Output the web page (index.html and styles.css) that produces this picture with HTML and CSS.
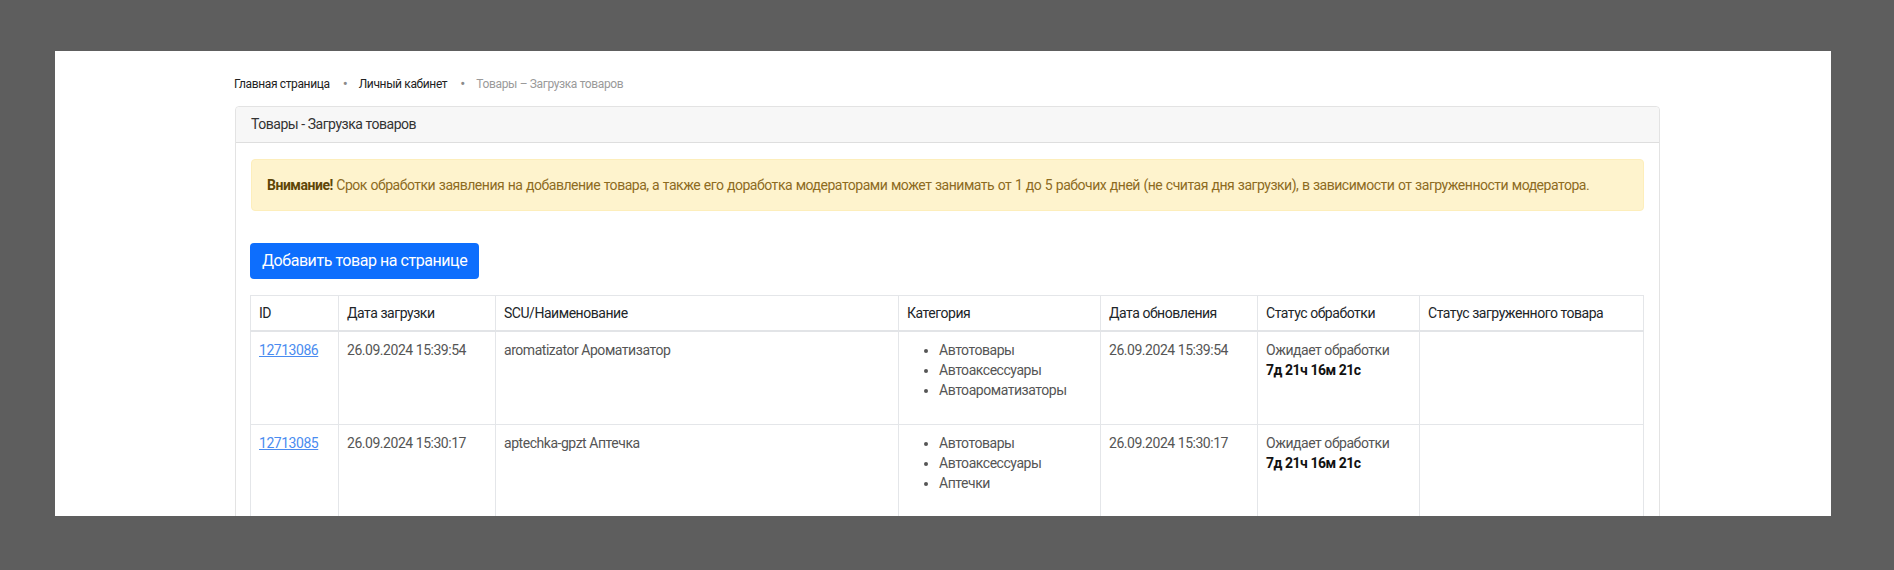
FILE: index.html
```html
<!DOCTYPE html>
<html lang="ru">
<head>
<meta charset="utf-8">
<title>Товары - Загрузка товаров</title>
<link rel="stylesheet" href="styles.css">
</head>
<body>
<div class="frame">
  <div class="page">
    <div class="container">
      <nav class="crumbs">
        <a class="crumb" href="#">Главная страница</a>
        <span class="sep">•</span>
        <a class="crumb" href="#">Личный кабинет</a>
        <span class="sep">•</span>
        <span class="crumb current">Товары – Загрузка товаров</span>
      </nav>
      <div class="card">
        <div class="card-header">Товары - Загрузка товаров</div>
        <div class="card-body">
          <div class="alert"><strong>Внимание!</strong> Срок обработки заявления на добавление товара, а также его доработка модераторами может занимать от 1 до 5 рабочих дней (не считая дня загрузки), в зависимости от загруженности модератора.</div>
          <button class="btn" type="button">Добавить товар на странице</button>
          <table class="grid">
            <thead>
              <tr>
                <th class="c-id">ID</th>
                <th class="c-date">Дата загрузки</th>
                <th class="c-name">SCU/Наименование</th>
                <th class="c-cat">Категория</th>
                <th class="c-upd">Дата обновления</th>
                <th class="c-st">Статус обработки</th>
                <th class="c-st2">Статус загруженного товара</th>
              </tr>
            </thead>
            <tbody>
              <tr>
                <td><a class="id-link" href="#">12713086</a></td>
                <td>26.09.2024 15:39:54</td>
                <td>aromatizator Ароматизатор</td>
                <td>
                  <ul class="cats">
                    <li>Автотовары</li>
                    <li>Автоаксессуары</li>
                    <li>Автоароматизаторы</li>
                  </ul>
                </td>
                <td>26.09.2024 15:39:54</td>
                <td>Ожидает обработки<br><b class="timer">7д 21ч 16м 21с</b></td>
                <td></td>
              </tr>
              <tr>
                <td><a class="id-link" href="#">12713085</a></td>
                <td>26.09.2024 15:30:17</td>
                <td>aptechka-gpzt Аптечка</td>
                <td>
                  <ul class="cats">
                    <li>Автотовары</li>
                    <li>Автоаксессуары</li>
                    <li>Аптечки</li>
                  </ul>
                </td>
                <td>26.09.2024 15:30:17</td>
                <td>Ожидает обработки<br><b class="timer">7д 21ч 16м 21с</b></td>
                <td></td>
              </tr>
            </tbody>
          </table>
        </div>
      </div>
    </div>
  </div>
</div>
</body>
</html>
```

FILE: styles.css
```css
* { box-sizing: border-box; }

html, body {
  margin: 0;
  padding: 0;
  background: #5e5e5e;
  font-family: Roboto, "Liberation Sans", Arial, sans-serif;
  font-size: 14px;
  line-height: 20px;
  letter-spacing: -0.033em;
  color: #555;
}

.frame {
  height: 570px;
  padding: 51px 63px 0 55px;
  overflow: hidden;
}

.page {
  background: #fff;
  height: 465px;
  overflow: hidden;
  padding: 24px 0 0 180px;
}

.container {
  width: 1425px;
}

.crumbs {
  display: flex;
  align-items: center;
  height: 18px;
  font-size: 12px;
  line-height: 18px;
  letter-spacing: -0.36px;
  margin-bottom: 13px;
  margin-left: -1px;
}

.crumb {
  color: #222;
  text-decoration: none;
}

.crumb.current {
  color: #9a9a9a;
}

.sep {
  color: #8a8a8a;
  font-size: 15px;
  letter-spacing: 0;
  padding: 0 11px 0 13px;
}

.card {
  border: 1px solid #e3e3e3;
  border-radius: 4px;
  background: #fff;
}

.card-header {
  background: #f7f7f7;
  border-bottom: 1px solid #dedede;
  border-radius: 4px 4px 0 0;
  padding: 7px 15px 8px;
  color: #333;
  font-size: 14px;
  line-height: 20px;
}

.card-body {
  display: flex;
  flex-direction: column;
  align-items: flex-start;
  padding: 16px 15px 15px;
}

.alert {
  align-self: stretch;
  background: #fef3cd;
  border: 1px solid #fdeebb;
  border-radius: 4px;
  padding: 15px 15px;
  color: #8d6b1f;
  letter-spacing: -0.48px;
  word-spacing: 0.55px;
  margin-bottom: 32px;
}

.alert strong {
  color: #5e4607;
  font-weight: 700;
}

.btn {
  font-family: Roboto, "Liberation Sans", Arial, sans-serif;
  font-size: 16px;
  line-height: 24px;
  letter-spacing: -0.028em;
  color: #fff;
  background: #0d6efd;
  border: 0;
  border-radius: 4px;
  padding: 6px 12px;
  margin-bottom: 16px;
  margin-left: -1px;
  cursor: pointer;
}

.grid {
  align-self: stretch;
  margin-left: -1px;
  border-collapse: collapse;
  table-layout: fixed;
  width: 1393px;
}

.grid th,
.grid td {
  border: 1px solid #e4e6e9;
  padding: 8px;
  text-align: left;
  vertical-align: top;
}

.grid th {
  font-weight: 400;
  color: #212529;
  padding: 7px 8px;
  border-bottom: 2px solid #e2e4e7;
}

.c-id { width: 88px; }
.c-date { width: 157px; }
.c-name { width: 403px; }
.c-cat { width: 202px; }
.c-upd { width: 157px; }
.c-st { width: 162px; }
.c-st2 { width: 224px; }

.id-link {
  color: #4a8cf0;
  text-decoration: underline;
}

.cats {
  margin: 0 0 16px;
  padding-left: 32px;
}

.timer {
  color: #111;
  font-weight: 700;
}
```
